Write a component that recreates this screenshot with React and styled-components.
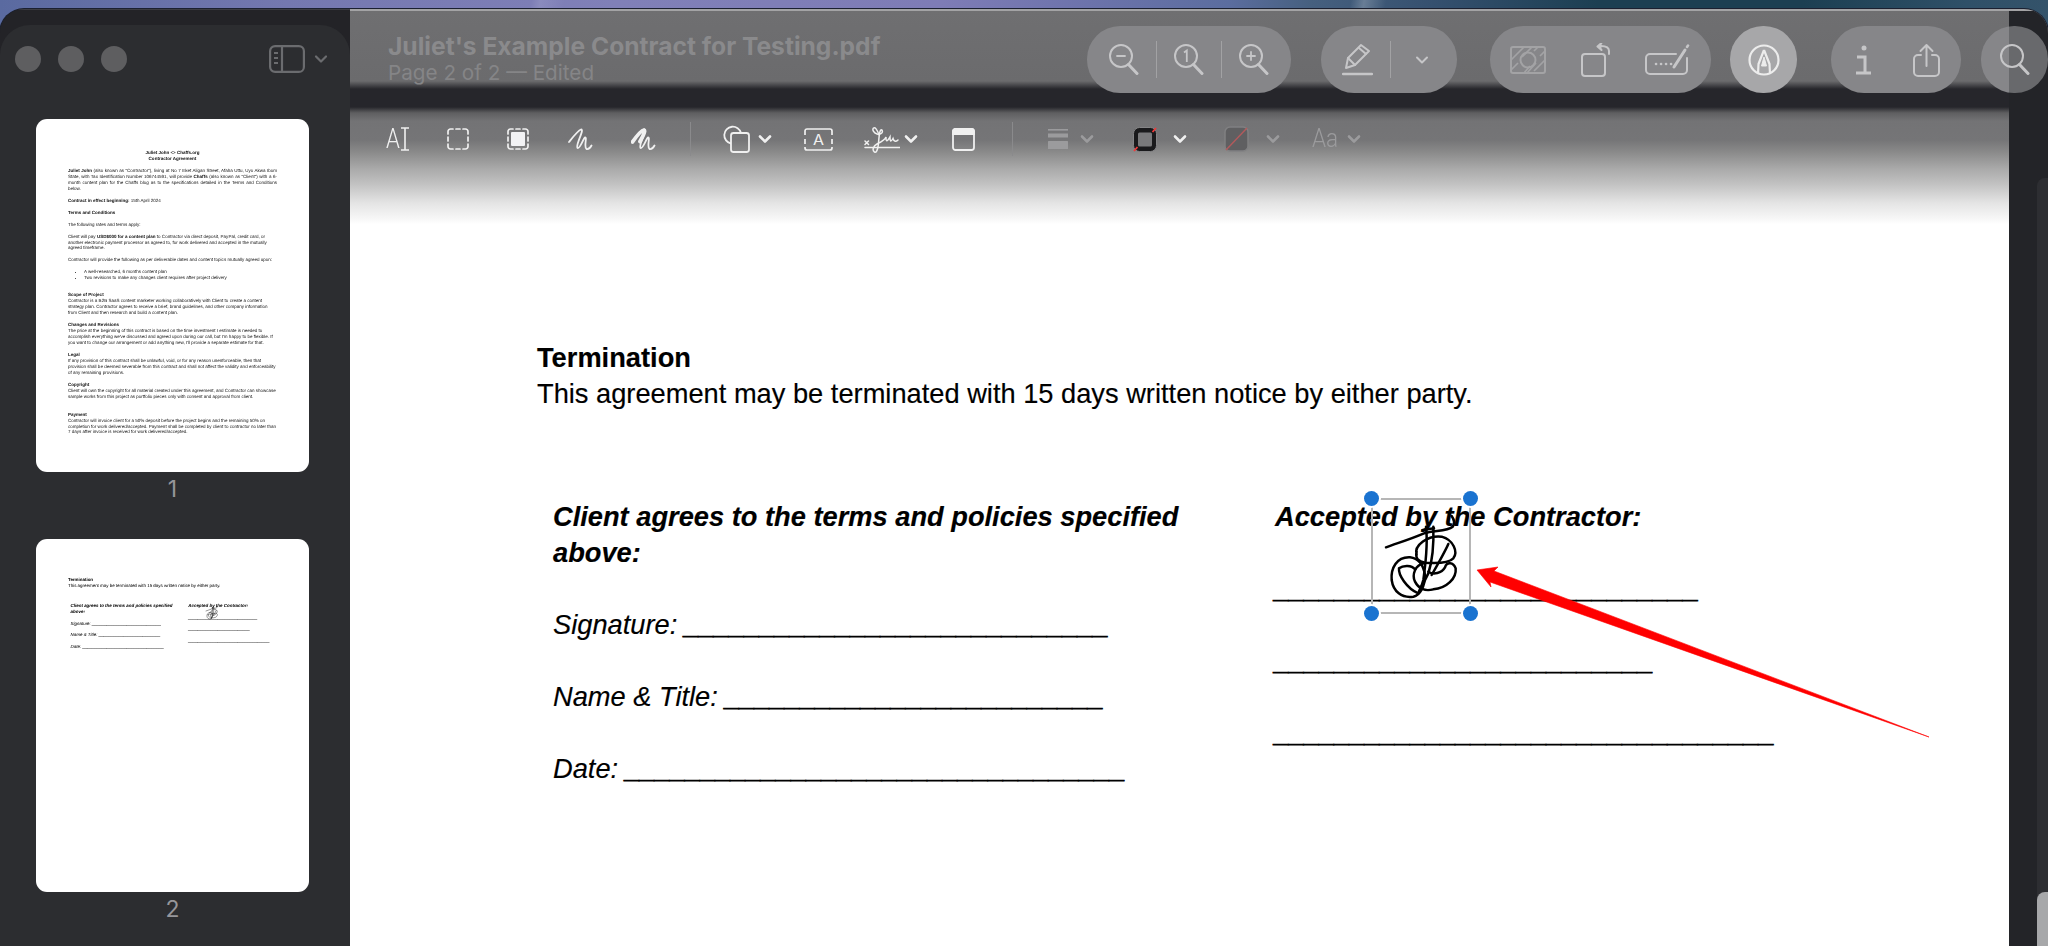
import React from "react";
import styled, { createGlobalStyle } from "styled-components";

const Global = createGlobalStyle`
  html, body { margin: 0; height: 100%; overflow: hidden; }
  body {
    background:
      linear-gradient(100deg, transparent 24%, rgba(255,255,255,.1) 24.4%, transparent 25.5%, transparent 61%, rgba(255,255,255,.22) 61.6%, transparent 62.6%, transparent 63%),
      linear-gradient(90deg, #5a6aa0 0, #7478b0 14%, #8080b8 30%, #7e7cb6 46%, #6f74ad 52%, #5b6d9f 60%, #46607f 64%, #35506f 70%, #1c3f52 78%, #1c3f52 88%, #2f5068 96%, #34536a 100%);
    font-family: "Inter", "Liberation Sans", sans-serif;
  }
  #root { height: 100%; }
`;

const Window = styled.div`
  margin-top: 9px;
  height: 937px;
  display: flex;
  overflow: hidden;
  border-radius: 24px 24px 0 0;
  background: #232327;
  box-shadow: 0 0 0 1px #1b2030;
`;

/* ---------- sidebar ---------- */
const Sidebar = styled.aside`
  width: 350px;
  flex: none;
  padding-top: 15px;
  background: #232327;
  border-top: 1px solid #3c3c42;
  box-sizing: border-box;
`;
const SidePanel = styled.div`
  height: 100%;
  background: #2c2d30;
  border-radius: 30px 30px 0 0;
  padding-top: 20px;
  box-sizing: border-box;
`;
const SideHead = styled.div`
  height: 27px;
  display: flex;
  align-items: center;
  padding-left: 15px;
  color: #6b6c6f;
`;
const Light = styled.span`
  width: 26px;
  height: 26px;
  margin-right: 17px;
  border-radius: 50%;
  background: #5e5e60;
`;
const SideToggle = styled.div`
  margin-left: 125px;
  display: flex;
  align-items: center;
  gap: 9px;
`;
const ThumbList = styled.div`
  margin-top: 47px;
  padding-left: 36px;
  display: flex;
  flex-direction: column;
  gap: 38px;
`;
const ThumbItem = styled.div`
  width: 273px;
  display: flex;
  flex-direction: column;
  align-items: center;
`;
const ThumbPage = styled.div`
  width: 273px;
  height: 353px;
  box-sizing: border-box;
  padding: ${(p) => p.$pad || "31px 32px 0"};
  background: #fff;
  border-radius: 11px;
  overflow: hidden;
`;
const ThumbBlur = styled.div`
  filter: blur(0.6px);
  color: #111;
  font-family: "Liberation Sans", sans-serif;
  font-size: 4.52px;
  line-height: 5.95px;
  text-rendering: geometricPrecision;
`;
const ThumbTitle = styled.div`
  text-align: center;
  font-weight: 700;
`;
const ThumbPara = styled.p`
  margin: ${(p) => p.$top || 6}px 0 0;
  text-align: ${(p) => (p.$just ? "justify" : "left")};
`;
const ThumbList2 = styled.ul`
  margin: 6px 0 0;
  padding-left: 16px;
`;
const PageLabel = styled.div`
  margin-top: 5px;
  height: 24px;
  font-size: 23px;
  line-height: 24px;
  color: #96969a;
`;
const MiniContract = styled.div`
  zoom: 0.163;
`;

/* ---------- main ---------- */
const Main = styled.main`
  flex: 1;
  min-width: 0;
  display: flex;
  flex-direction: column;
`;
const Header = styled.header`
  height: 98px;
  flex: none;
  display: flex;
  box-sizing: border-box;
  padding: 15px 0 0 38px;
  border-top: 2px solid #a3a3a5;
  background:
    linear-gradient(90deg, transparent 1659px, #232428 1659px),
    linear-gradient(180deg, #6f6f71 0, #6b6b6d 70px, #26262b 78px, #26262b 100%);
  overflow: hidden;
`;
const TitleBlock = styled.div`
  flex: 1;
  margin-top: 6px;
`;
const Title = styled.div`
  font-size: 24.6px;
  line-height: 28px;
  font-weight: 700;
  color: #8a8a8c;
  white-space: nowrap;
`;
const Subtitle = styled.div`
  font-size: 20.7px;
  line-height: 26px;
  color: #858587;
  white-space: nowrap;
`;
const Pill = styled.div`
  flex: none;
  height: 67px;
  width: ${(p) => p.$w}px;
  margin-left: ${(p) => p.$ml || 0}px;
  padding: ${(p) => p.$pad || "0"};
  box-sizing: border-box;
  display: flex;
  align-items: center;
  justify-content: ${(p) => p.$justify || "flex-start"};
  gap: ${(p) => p.$gap || 0}px;
  border-radius: 33px;
  background: ${(p) =>
    p.$active ? "#a7a7a9" : p.$edge ? "linear-gradient(90deg, #868689 0 28px, #68696c 28px)" : "#868689"};
  color: ${(p) => (p.$active ? "#ececec" : "#c6c6c8")};
`;
const PillDivider = styled.span`
  width: 1px;
  height: 37px;
  background: #a2a2a4;
`;
const ChevronSlot = styled.span`
  width: 28px;
  display: flex;
  justify-content: center;
`;

const Body = styled.div`
  flex: 1;
  min-height: 0;
  display: flex;
`;
const Content = styled.div`
  flex: 1;
  min-width: 0;
  background: #fff;
  position: relative;
`;
const Toolbar = styled.div`
  height: 117px;
  box-sizing: border-box;
  padding: 15px 0 0 36px;
  display: flex;
  align-items: flex-start;
  background: linear-gradient(180deg, #26262b 0, #5f5f61 6px, #737375 14px, #757577 33px, #888 44px, #aaa 62px, #c0c0c0 76px, #e4e4e4 96px, #f6f6f6 111px, #fff 117px);
`;
const ToolRow = styled.div`
  height: 34px;
  display: flex;
  align-items: center;
`;
const Tool = styled.span`
  display: flex;
  align-items: center;
  margin-left: ${(p) => p.$ml || 0}px;
  color: ${(p) => (p.$dim ? "#9b9b9d" : "#f0f0f0")};
`;
const ToolDivider = styled.span`
  width: 1px;
  height: 34px;
  margin-left: ${(p) => p.$ml}px;
  background: #8a8a8c;
`;
const GlyphA = styled.span`
  display: block;
  width: 15px;
  font-family: Roboto, sans-serif;
  font-weight: 300;
  font-size: 27px;
  line-height: 30px;
  transform: scaleX(0.82);
  transform-origin: left center;
`;
const GlyphAa = styled.span`
  display: block;
  width: 27px;
  font-family: Roboto, sans-serif;
  font-weight: 300;
  font-size: 25px;
  line-height: 30px;
  white-space: nowrap;
  transform: scaleX(0.9);
  transform-origin: left center;
`;

/* ---------- document ---------- */
const Doc = styled.div`
  padding: 116px 0 0 187px;
`;
const ContractRoot = styled.div`
  font-family: "Liberation Sans", Arial, sans-serif;
  font-size: 27.25px;
  line-height: 36px;
  color: #000;
  -webkit-text-stroke: 0.15px #000;
`;
const Heading = styled.div`
  font-weight: 700;
`;
const Columns = styled.div`
  margin-top: 87px;
  display: flex;
`;
const LeftCol = styled.div`
  width: 662px;
  padding: 0 60px 0 16px;
  flex: none;
`;
const RightCol = styled.div`
  position: relative;
  white-space: nowrap;
`;
const ColHead = styled.div`
  font-weight: 700;
  font-style: italic;
  margin-bottom: 2px;
`;
const FieldRow = styled.div`
  margin-top: 36px;
  font-style: italic;
  white-space: nowrap;
`;
const Rule = styled.span`
  -webkit-text-stroke: 0.7px #000;
`;
const Signature = styled.svg`
  position: absolute;
  left: 25px;
  top: -19px;
  width: 220px;
  height: 150px;
  pointer-events: none;
`;
const SelectionFrame = styled.div`
  position: absolute;
  left: 96px;
  top: -1px;
  width: 96px;
  height: 112px;
  border: 2px solid #b6b6b6;
`;
const Handle = styled.span`
  position: absolute;
  width: 15px;
  height: 15px;
  border-radius: 50%;
  background: #1a73d0;
  box-shadow: 0 0 0 2px #fff;
  ${(p) => (p.$bottom ? "bottom: -9px;" : "top: -9px;")}
  ${(p) => (p.$right ? "right: -9px;" : "left: -9px;")}
`;
const Arrow = styled.svg`
  position: absolute;
  left: 1110px;
  top: 444px;
  width: 480px;
  height: 190px;
`;

const Strip = styled.div`
  width: 39px;
  flex: none;
  display: flex;
  justify-content: flex-end;
  background: #232428;
`;
const ScrollTrack = styled.div`
  width: 11px;
  margin-top: 71px;
  display: flex;
  flex-direction: column;
  justify-content: flex-end;
  background: #2d2e32;
  border-radius: 8px 0 0 0;
`;
const ScrollThumb = styled.div`
  height: 54px;
  background: #a7a8aa;
  border-radius: 8px 0 0 0;
`;

/* ---------- icons ---------- */
const Chevron = ({ w = 14, sw = 2.6, color = "currentColor" }) => (
  <svg width={w} height="10" viewBox="0 0 14 10" fill="none" stroke={color} strokeWidth={sw} strokeLinecap="round" strokeLinejoin="round">
    <path d="M2 2.5 7 7.5 12 2.5" />
  </svg>
);
const Glass = ({ children }) => (
  <svg width="30" height="31" viewBox="0 0 30 31" fill="none" stroke="currentColor" strokeWidth="2" strokeLinecap="round">
    <circle cx="12" cy="12" r="11" />
    <path d="M19.5 20.5 28 29.5" strokeWidth="3" />
    {children}
  </svg>
);
const PenIcon = () => (
  <svg width="31" height="33" viewBox="0 0 31 33" fill="none" stroke="currentColor" strokeWidth="2" strokeLinejoin="round" strokeLinecap="round">
    <path d="M4 25 6 15 19 2 27 8 13 22Z" />
    <path d="M6 15 13 22M17 5 24 11" />
    <path d="M1 31H30" strokeWidth="2.4" />
  </svg>
);
const RedactIcon = () => (
  <svg width="36" height="28" viewBox="0 0 36 28" fill="none" stroke="#a3a3a5" strokeWidth="2">
    <rect x="1" y="1" width="34" height="26" rx="2" />
    <path d="M1 14 14 1M1 24 8 17M22 1 12 11M28 1 24 5M35 5 30 10M35 14 24 25M26 17 17 27M20 20 14 27" strokeWidth="1.7" />
    <circle cx="18" cy="14" r="7.5" />
  </svg>
);
const RotateIcon = () => (
  <svg width="31" height="34" viewBox="0 0 31 34" fill="none" stroke="currentColor" strokeWidth="2" strokeLinecap="round" strokeLinejoin="round">
    <rect x="2" y="11" width="23" height="22" rx="3" />
    <path d="M29 11V8C29 4.500 26 3 21 3" />
    <path d="M21.500 0 17.500 3.500 21.500 7" fill="currentColor" />
  </svg>
);
const FormIcon = () => (
  <svg width="46" height="31" viewBox="0 0 46 31" fill="none" stroke="currentColor" strokeWidth="2" strokeLinecap="round">
    <path d="M31 10H5a4 4 0 0 0-4 4v12a4 4 0 0 0 4 4h33a4 4 0 0 0 4-4V14" />
    <path d="M29 23 40 6" strokeWidth="3" />
    <path d="M42 3 43 1.500" strokeWidth="2.500" />
    <path d="M11 20h.1M16 20h.1M21 20h.1M26 20h.1" strokeWidth="2.600" />
  </svg>
);
const MarkupIcon = () => (
  <svg width="32" height="32" viewBox="0 0 32 32" fill="none" stroke="currentColor" strokeWidth="2.200" strokeLinejoin="round">
    <circle cx="16" cy="16" r="14.500" />
    <path d="M16 6 10.500 20 10 30M16 6 21.500 20 22 30" />
    <path d="M16 13 13.500 22H18.500Z" fill="currentColor" strokeWidth="1" />
  </svg>
);
const InfoIcon = () => (
  <svg width="17" height="30" viewBox="0 0 17 30" fill="none" stroke="currentColor" strokeWidth="3">
    <circle cx="9" cy="3" r="2.500" fill="currentColor" stroke="none" />
    <path d="M2 12H10V28M1 28H16" />
  </svg>
);
const ShareIcon = () => (
  <svg width="27" height="34" viewBox="0 0 27 34" fill="none" stroke="currentColor" strokeWidth="2" strokeLinecap="round" strokeLinejoin="round">
    <path d="M8 12H5a4 4 0 0 0-4 4v13a4 4 0 0 0 4 4h17a4 4 0 0 0 4-4V16a4 4 0 0 0-4-4h-3" />
    <path d="M13.500 23V2M7.500 8 13.500 2 19.500 8" />
  </svg>
);
const SideIcon = () => (
  <svg width="36" height="28" viewBox="0 0 36 28" fill="none" stroke="currentColor" strokeWidth="2.200">
    <rect x="1.100" y="1.100" width="33.800" height="25.800" rx="5" />
    <path d="M13 1V27" />
    <path d="M5 8H9M5 13H9M5 18H9" strokeWidth="2" />
  </svg>
);
const DashRect = ({ fill }) => (
  <svg width="22" height="22" viewBox="0 0 22 22" fill="none" stroke="currentColor" strokeWidth="1.700" strokeLinecap="round">
    <path d="M1 6V3.500A2.500 2.500 0 0 1 3.500 1H6M9 1H13M16 1H18.500A2.500 2.500 0 0 1 21 3.500V6M21 9V13M21 16V18.500A2.500 2.500 0 0 1 18.500 21H16M13 21H9M6 21H3.500A2.500 2.500 0 0 1 1 18.500V16M1 13V9" />
    {fill && <rect x="4" y="4" width="14" height="14" rx="1" fill="#f2f2f4" stroke="none" />}
  </svg>
);
const Scribble = ({ bold }) => (
  <svg width="25" height="23" viewBox="0 0 25 23" fill="none" stroke="currentColor" strokeWidth="1.800" strokeLinecap="round" strokeLinejoin="round">
    <path d="M1 14C5 9 10 2.500 13 1.500C17 1.500 7 17 9.500 20C12 21 15 11 17 9.500C19.500 9 15.500 19 18.500 21C21 21.500 22.500 19.500 23.500 17.500" />
    {bold && <path d="M1.500 14C5 9 10 2.500 13 2C15 2.500 11.500 9 9 13.500" strokeWidth="3.800" />}
  </svg>
);
const CursorBeam = () => (
  <svg width="9" height="24" viewBox="0 0 9 24" fill="none" stroke="currentColor" strokeWidth="1.600">
    <path d="M0 1H8M4 1V23M0 23H8" />
  </svg>
);
const ShapesIcon = () => (
  <svg width="27" height="28" viewBox="0 0 27 28" fill="none" stroke="currentColor" strokeWidth="1.800">
    <path d="M8 18.500A8.500 8.500 0 1 1 18 8" />
    <rect x="8" y="8" width="18" height="19" rx="2.500" />
  </svg>
);
const TextBoxIcon = () => (
  <svg width="29" height="23" viewBox="0 0 29 23" fill="none" stroke="currentColor" strokeWidth="1.700">
    <path d="M1 7V3A2 2 0 0 1 3 1H26A2 2 0 0 1 28 3V7M28 11V16M28 19V20A2 2 0 0 1 26 22H3A2 2 0 0 1 1 20V19M1 16V11" />
    <text x="9" y="16.500" fontFamily="Inter, sans-serif" fontSize="14" fill="currentColor" stroke="none" textLength="11" lengthAdjust="spacingAndGlyphs">A</text>
  </svg>
);
const SignIcon = () => (
  <svg width="36" height="27" viewBox="0 0 36 27" fill="none" stroke="currentColor" strokeWidth="1.500" strokeLinecap="round">
    <path d="M1 21.500H36" />
    <path d="M1 15 4.500 18.500M4.500 15 1 18.500" />
    <path d="M15 9C13 3 11 1 9.500 2C8 3.500 9.500 7 13 8C18 9 19 6 18 4C15 2 15 15 14 21C13 26 12 26.500 10.500 26C8 24.500 9 20 13 18C18 15.500 21 14 22 11C22 16 23 16 26 11C26 16 27 16 29 12.500C30 16 32 16 34 14" />
  </svg>
);
const WindowIcon = () => (
  <svg width="23" height="23" viewBox="0 0 23 23" fill="none" stroke="currentColor" strokeWidth="1.800">
    <rect x="1" y="1" width="21" height="21" rx="2.500" />
    <path d="M1 3.500A2.500 2.500 0 0 1 3.500 1H19.500A2.500 2.500 0 0 1 22 3.500V6H1Z" fill="currentColor" />
  </svg>
);
const LinesIcon = () => (
  <svg width="20" height="20" viewBox="0 0 20 20" fill="#9b9b9d">
    <rect y="0" width="20" height="1.600" />
    <rect y="4.500" width="20" height="4" />
    <rect y="12" width="20" height="8" rx="0.500" />
  </svg>
);
const BorderSwatch = () => (
  <svg width="24" height="25" viewBox="0 0 24 25" fill="none">
    <rect x="0.500" y="0.500" width="23" height="24" rx="6" fill="#1a1a1c" stroke="#858587" />
    <rect x="5" y="5.500" width="14" height="14" rx="1.500" fill="#79797b" />
    <path d="M19.500 5 23 1M1 24 4.500 20" stroke="#f03a3a" strokeWidth="1.800" />
  </svg>
);
const FillSwatch = () => (
  <svg width="25" height="26" viewBox="0 0 25 26" fill="none">
    <rect x="1" y="1" width="23" height="24" rx="5" fill="#5f5f61" stroke="#808082" strokeWidth="1.500" />
    <path d="M2 24 23 2" stroke="#b35a5c" strokeWidth="1.400" />
  </svg>
);

const Scrawl = () => (
  <Signature viewBox="0 0 660 450" fill="none" stroke="#000" strokeWidth="7.500" strokeLinecap="round" strokeLinejoin="round">
    <path d="M258 202C290 190 330 178 372 160C400 150 440 155 458 140C465 130 462 118 455 108" />
    <path d="M350 225C340 195 385 165 425 170C460 180 475 215 460 235C445 250 400 250 375 248C355 245 345 235 350 215" />
    <path d="M372 250C345 255 335 285 345 305C355 325 375 335 400 328C440 325 470 295 467 265C460 245 440 245 435 262C425 280 400 285 385 275" />
    <path d="M330 232C290 230 272 265 275 300C280 335 305 355 340 350C360 345 375 320 375 285C370 255 355 235 330 232Z" />
    <path d="M297 265C310 255 335 255 345 268M297 265C295 285 320 325 355 340" />
    <path d="M378 140C385 200 375 260 370 300C365 320 358 330 355 340" />
    <path d="M400 140C402 200 398 240 385 280C375 300 365 320 358 335" />
    <path d="M368 150 402 145" />
    <path d="M445 192C435 215 415 250 395 285" />
  </Signature>
);

const Selection = () => (
  <SelectionFrame>
    <Handle />
    <Handle $right />
    <Handle $bottom />
    <Handle $bottom $right />
  </SelectionFrame>
);

const bar = (n) => <Rule>{"_".repeat(n)}</Rule>;

const Contract = ({ selected }) => (
  <ContractRoot>
    <Heading>Termination</Heading>
    <div>This agreement may be terminated with 15 days written notice by either party.</div>
    <Columns>
      <LeftCol>
        <ColHead>Client agrees to the terms and policies specified above:</ColHead>
        <FieldRow>Signature: {bar(28)}</FieldRow>
        <FieldRow>Name &amp; Title: {bar(25)}</FieldRow>
        <FieldRow>Date: {bar(33)}</FieldRow>
      </LeftCol>
      <RightCol>
        <ColHead>Accepted by the Contractor:</ColHead>
        <FieldRow>{bar(28)}</FieldRow>
        <FieldRow>{bar(25)}</FieldRow>
        <FieldRow>{bar(33)}</FieldRow>
        <Scrawl />
        {selected && <Selection />}
      </RightCol>
    </Columns>
  </ContractRoot>
);

const ThumbOne = () => (
  <ThumbBlur>
    <ThumbTitle>Juliet John {"<>"} Chaffs.org</ThumbTitle>
    <ThumbTitle>Contractor Agreement</ThumbTitle>
    <ThumbPara $just>
      <b>Juliet John</b> (also known as "Contractor"), living at No 7 Eket Aligan Street, Afaha Uttu, Uyo Akwa Ibom State, with Tax Identification Number 106744591, will provide <b>Chaffs</b> (also known as "Client") with a 6-month content plan for the Chaffs blog as to the specifications detailed in the Terms and Conditions below.
    </ThumbPara>
    <ThumbPara><b>Contract in effect beginning:</b> 15th April 2024</ThumbPara>
    <ThumbPara><b>Terms and Conditions</b></ThumbPara>
    <ThumbPara>The following rates and terms apply:</ThumbPara>
    <ThumbPara>
      Client will pay <b>USD$000 for a content plan</b> to Contractor via direct deposit, PayPal, credit card, or another electronic payment processor as agreed to, for work delivered and accepted in the mutually agreed timeframe.
    </ThumbPara>
    <ThumbPara>Contractor will provide the following as per deliverable dates and content topics mutually agreed upon:</ThumbPara>
    <ThumbList2>
      <li>A well-researched, 6 months content plan</li>
      <li>Two revisions to make any changes client requires after project delivery</li>
    </ThumbList2>
    <ThumbPara $top={11}>
      <b>Scope of Project</b><br />
      Contractor is a B2B SaaS content marketer working collaboratively with Client to create a content strategy plan. Contractor agrees to receive a brief, brand guidelines, and other company information from Client and then research and build a content plan.
    </ThumbPara>
    <ThumbPara>
      <b>Changes and Revisions</b><br />
      The price at the beginning of this contract is based on the time investment I estimate is needed to accomplish everything we've discussed and agreed upon during our call, but I'm happy to be flexible. If you want to change our arrangement or add anything new, I'll provide a separate estimate for that.
    </ThumbPara>
    <ThumbPara>
      <b>Legal</b><br />
      If any provision of this contract shall be unlawful, void, or for any reason unenforceable, then that provision shall be deemed severable from this contract and shall not affect the validity and enforceability of any remaining provisions.
    </ThumbPara>
    <ThumbPara>
      <b>Copyright</b><br />
      Client will own the copyright for all material created under this agreement, and Contractor can showcase sample works from this project as portfolio pieces only with consent and approval from client.
    </ThumbPara>
    <ThumbPara $top={12}>
      <b>Payment</b><br />
      Contractor will invoice client for a 50% deposit before the project begins and the remaining 50% on completion for work delivered/accepted. Payment shall be completed by client to contractor no later than 7 days after invoice is received for work delivered/accepted.
    </ThumbPara>
  </ThumbBlur>
);

export default function App() {
  return (
    <>
      <Global />
      <Window>
        <Sidebar>
          <SidePanel>
            <SideHead>
              <Light />
              <Light />
              <Light />
              <SideToggle>
                <SideIcon />
                <Chevron w={14} sw={2.2} />
              </SideToggle>
            </SideHead>
            <ThumbList>
              <ThumbItem>
                <ThumbPage>
                  <ThumbOne />
                </ThumbPage>
                <PageLabel>1</PageLabel>
              </ThumbItem>
              <ThumbItem>
                <ThumbPage $pad="38px 32px 0">
                  <ThumbBlur>
                    <MiniContract>
                      <Contract />
                    </MiniContract>
                  </ThumbBlur>
                </ThumbPage>
                <PageLabel>2</PageLabel>
              </ThumbItem>
            </ThumbList>
          </SidePanel>
        </Sidebar>
        <Main>
          <Header>
            <TitleBlock>
              <Title>Juliet's Example Contract for Testing.pdf</Title>
              <Subtitle>Page 2 of 2 — Edited</Subtitle>
            </TitleBlock>
            <Pill $w={204} $pad="0 22px" $gap={17}>
              <Glass><path d="M8 12H16" strokeWidth="1.800" /></Glass>
              <PillDivider />
              <Glass><path d="M10 8.500 12.800 6.500V18" strokeWidth="1.800" strokeLinecap="butt" /></Glass>
              <PillDivider />
              <Glass><path d="M8 12H16M12 8V16" strokeWidth="1.800" /></Glass>
            </Pill>
            <Pill $w={136} $ml={30} $pad="0 21px" $gap={17}>
              <PenIcon />
              <PillDivider />
              <ChevronSlot><Chevron w={16} sw={2} /></ChevronSlot>
            </Pill>
            <Pill $w={221} $ml={33} $pad="0 20px" $justify="space-between">
              <RedactIcon />
              <RotateIcon />
              <FormIcon />
            </Pill>
            <Pill $w={67} $ml={19} $justify="center" $active>
              <MarkupIcon />
            </Pill>
            <Pill $w={130} $ml={34} $pad="0 21px 0 24px" $justify="space-between">
              <InfoIcon />
              <ShareIcon />
            </Pill>
            <Pill $w={67} $ml={20} $justify="center" $edge>
              <Glass />
            </Pill>
          </Header>
          <Body>
            <Content>
              <Toolbar>
                <ToolRow>
                  <Tool><GlyphA>A</GlyphA><CursorBeam /></Tool>
                  <Tool $ml={37}><DashRect /></Tool>
                  <Tool $ml={38}><DashRect fill /></Tool>
                  <Tool $ml={39}><Scribble /></Tool>
                  <Tool $ml={38}><Scribble bold /></Tool>
                  <ToolDivider $ml={34} />
                  <Tool $ml={32}><ShapesIcon /></Tool>
                  <Tool $ml={8}><Chevron /></Tool>
                  <Tool $ml={32}><TextBoxIcon /></Tool>
                  <Tool $ml={31}><SignIcon /></Tool>
                  <Tool $ml={4}><Chevron /></Tool>
                  <Tool $ml={34}><WindowIcon /></Tool>
                  <ToolDivider $ml={37} />
                  <Tool $ml={35} $dim><LinesIcon /></Tool>
                  <Tool $ml={12} $dim><Chevron /></Tool>
                  <Tool $ml={39}><BorderSwatch /></Tool>
                  <Tool $ml={16}><Chevron /></Tool>
                  <Tool $ml={37}><FillSwatch /></Tool>
                  <Tool $ml={17} $dim><Chevron /></Tool>
                  <Tool $ml={32} $dim><GlyphAa>Aa</GlyphAa></Tool>
                  <Tool $ml={8} $dim><Chevron /></Tool>
                </ToolRow>
              </Toolbar>
              <Doc>
                <Contract selected />
              </Doc>
              <Arrow viewBox="0 0 480 190">
                <polygon points="17,19 38,16 34,20 469,186 30,31 31,36" fill="#ff0000" stroke="#ff0000" strokeWidth="0.6" />
              </Arrow>
            </Content>
            <Strip>
              <ScrollTrack>
                <ScrollThumb />
              </ScrollTrack>
            </Strip>
          </Body>
        </Main>
      </Window>
    </>
  );
}
